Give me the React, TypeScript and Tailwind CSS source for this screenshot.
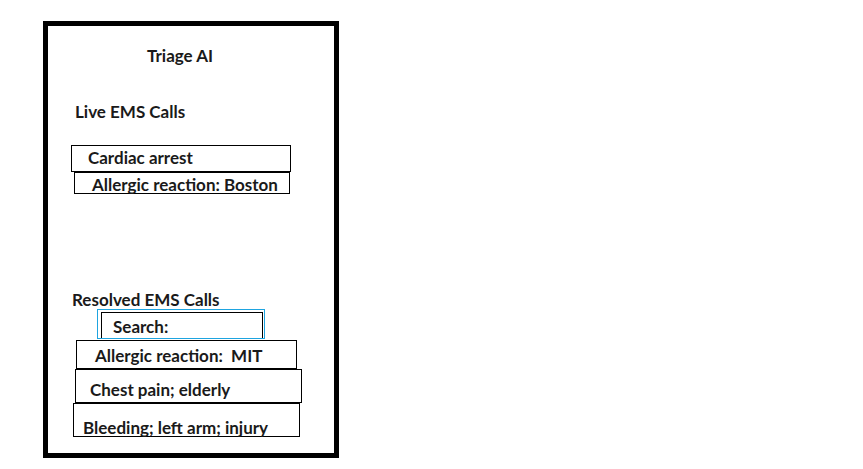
const font = { fontFamily: 'Lato, "Open Sans", sans-serif' }

// ─── Triage AI wireframe ─────────────────────────────────────────────────────

function CallBox({
  label,
  className,
  textClass,
}: {
  label: string
  className: string
  textClass: string
}) {
  return (
    <div className={`border border-black ${className}`}>
      <div className={`text-[17px] leading-[20px] font-bold text-[#1a1a1a] whitespace-pre ${textClass}`}>
        {label}
      </div>
    </div>
  )
}

export default function App() {
  return (
    <div className="min-h-screen bg-white pl-[43px] pt-[21px]" style={font}>
      <div className="w-[296px] h-[437px] border-[5px] border-black flex flex-col">
        {/* ── Header ─────────────────────────────────────────── */}
        <h1 className="ml-[99px] mt-[20px] text-[17px] leading-[20px] font-bold text-[#1a1a1a]">
          Triage AI
        </h1>

        {/* ── Live calls ─────────────────────────────────────── */}
        <h2 className="ml-[27px] mt-[36px] h-[18px] text-[17px] leading-[20px] font-bold text-[#1a1a1a]">
          Live EMS Calls
        </h2>
        <CallBox
          label="Cardiac arrest"
          className="ml-[23px] mt-[25px] w-[220px] h-[27px]"
          textClass="pl-[16px] pt-[2px]"
        />
        <CallBox
          label="Allergic reaction: Boston"
          className="ml-[26px] w-[216px] h-[22px]"
          textClass="pl-[17px] pt-[2px]"
        />

        {/* ── Resolved calls ─────────────────────────────────── */}
        <h2 className="ml-[24px] mt-[96px] h-[18px] text-[17px] leading-[20px] font-bold text-[#1a1a1a]">
          Resolved EMS Calls
        </h2>
        <div className="ml-[49px] mt-[1px] w-[168px] h-[30px] border border-[#1ea4e0]">
          <div className="ml-[3px] mt-[2px] h-[26px] w-[162px] border-l border-t border-r border-black">
            <div className="pl-[11px] pt-[4px] text-[17px] leading-[20px] font-bold text-[#1a1a1a]">
              Search:
            </div>
          </div>
        </div>
        <CallBox
          label="Allergic reaction:  MIT"
          className="ml-[28px] mt-[1px] w-[221px] h-[29px]"
          textClass="pl-[18px] pt-[5px]"
        />
        <CallBox
          label="Chest pain; elderly"
          className="ml-[27px] w-[227px] h-[34px]"
          textClass="pl-[14px] pt-[10px]"
        />
        <CallBox
          label="Bleeding; left arm; injury"
          className="ml-[25px] w-[227px] h-[34px]"
          textClass="pl-[9px] pt-[14px]"
        />
      </div>
    </div>
  )
}
